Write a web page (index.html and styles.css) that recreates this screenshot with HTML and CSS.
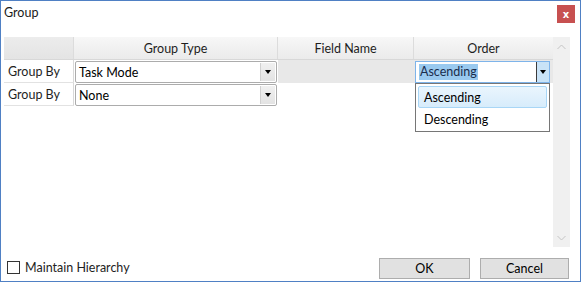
FILE: index.html
```html
<!DOCTYPE html>
<html>
<head>
<meta charset="utf-8">
<link rel="stylesheet" href="styles.css">
</head>
<body>
<div class="window">
  <div class="titlebar">
    <span class="title">Group</span>
    <span class="close">x</span>
  </div>
  <div class="grid-area">
    <div class="grid">
      <div class="row head">
        <div class="cell rh"></div>
        <div class="cell c-type">Group Type</div>
        <div class="cell c-field">Field Name</div>
        <div class="cell c-order">Order</div>
      </div>
      <div class="row data sel">
        <div class="cell rh">Group By</div>
        <div class="cell c-type">
          <div class="combo"><span class="combo-text">Task Mode</span><span class="combo-btn"><i class="tri"></i></span></div>
        </div>
        <div class="cell c-field grey"></div>
        <div class="cell c-order grey">
          <div class="combo active"><span class="combo-text"><span class="hl">Ascending</span></span><span class="combo-btn"><i class="tri"></i></span></div>
          <div class="popup">
            <div class="item on">Ascending</div>
            <div class="item">Descending</div>
          </div>
        </div>
      </div>
      <div class="row data">
        <div class="cell rh">Group By</div>
        <div class="cell c-type">
          <div class="combo"><span class="combo-text">None</span><span class="combo-btn"><i class="tri"></i></span></div>
        </div>
        <div class="cell c-field"></div>
        <div class="cell c-order"></div>
      </div>
    </div>
    <div class="vscroll">
      <svg class="arrow up" width="9" height="6" viewBox="0 0 9 6"><path d="M0.5 5 L4.5 1 L8.5 5" fill="none" stroke="#c4c4c4" stroke-width="1"/></svg>
      <svg class="arrow down" width="9" height="6" viewBox="0 0 9 6"><path d="M0.5 1 L4.5 5 L8.5 1" fill="none" stroke="#c4c4c4" stroke-width="1"/></svg>
    </div>
  </div>
  <div class="footer">
    <label class="check"><span class="box"></span><span>Maintain Hierarchy</span></label>
    <div class="buttons">
      <span class="btn ok">OK</span>
      <span class="btn cancel">Cancel</span>
    </div>
  </div>
</div>
</body>
</html>
```

FILE: styles.css
```css
* { box-sizing: border-box; }
html, body { margin: 0; padding: 0; background: #fff; }
body { font-family: Lato, "Noto Sans", sans-serif; font-size: 12.5px; color: #1e1e1e; }

.window {
  width: 581px; height: 282px;
  border: 1px solid #4f80c4;
  display: flex; flex-direction: column;
  background: #fff;
}
.titlebar {
  height: 36px;
  display: flex; align-items: flex-start; justify-content: space-between;
  padding: 3px 4px 0 3px;
}
.title { line-height: 18px; color: #1a1a1a; }
.close {
  width: 18px; height: 18px; margin-top: 1px;
  background: #c75050; color: #fff;
  font-family: "DejaVu Sans", sans-serif; font-weight: bold; font-size: 10px;
  display: flex; align-items: center; justify-content: center;
  margin-right: 1px;
}

.grid-area {
  display: flex;
  margin: 0 10px 0 3px;
  height: 210px;
}
.grid { width: 549px; display: flex; flex-direction: column; }
.vscroll {
  width: 17px; background: #f0f0f0;
  display: flex; flex-direction: column; justify-content: space-between; align-items: center;
  padding: 7px 0 6px;
}

.row { display: flex; height: 23px; }
.cell { flex: none; height: 100%; position: relative; }
.rh { width: 70px; }
.c-type { width: 204px; }
.c-field { width: 136px; }
.c-order { width: 139px; }

.head { background: linear-gradient(#f7f7f7, #ebebeb); border-bottom: 1px solid #d8d8d8; }
.head .cell { display: flex; align-items: center; justify-content: center; border-right: 1px solid #dcdcdc; }
.head .cell:last-child { border-right: none; }
.head .rh { background: linear-gradient(#ececec, #e4e4e4); }

.data .rh {
  padding-left: 4px; display: flex; align-items: center;
  border-right: 1px solid #d9d9d9; border-bottom: 1px solid #e2e2e2;
}
.grey { background: #e8e8e8; }

.combo {
  position: absolute; left: 1px; top: 1px; right: 1px; bottom: 0;
  border: 1px solid #acacac; border-radius: 2px;
  background: #fff; display: flex;
}
.combo-text { flex: 1; padding-left: 3px; display: flex; align-items: center; color: #000; }
.combo-btn {
  width: 15px; margin: 1px 1px 1px 0;
  background: linear-gradient(#f0f0f0, #e3e3e3);
  border-left: 1px solid #d0d0d0;
  display: flex; align-items: center; justify-content: center;
}
.tri { width: 0; height: 0; border-left: 3.5px solid transparent; border-right: 3.5px solid transparent; border-top: 4px solid #000; }

.combo.active { border-color: #7eb4ea; border-radius: 0; right: 3px; }
.combo.active .combo-btn { background: #c9e3f7; border-left: 1px solid #3c3c3c; margin: 0; width: 13px; }
.hl { background: #99c9ef; color: #1a2c4c; padding: 0 1px; line-height: 16px; }

.popup {
  position: absolute; left: 1px; top: 23px; width: 135px; height: 49px;
  background: #fff; border: 1px solid #767676;
  padding: 2px 2px;
  z-index: 2;
}
.item { height: 22px; display: flex; align-items: center; padding-left: 5px; color: #000; border: 1px solid transparent; }
.item.on {
  background: linear-gradient(#eaf5fd, #d7ecfb);
  border-color: #a8d6f6; border-radius: 2px;
}

.footer {
  flex: 1;
  display: flex; align-items: flex-end; justify-content: space-between;
  padding: 0 11px 2px 6px;
}
.check { display: flex; align-items: center; gap: 5px; margin-bottom: 4px; }
.box { width: 13px; height: 13px; border: 1px solid #333; background: #fff; }
.buttons { display: flex; gap: 10px; }
.btn {
  height: 21px; display: flex; align-items: center; justify-content: center;
  background: #e1e1e1; border: 1px solid #adadad; color: #000;
}
.ok { width: 91px; }
.cancel { width: 89px; }
```
